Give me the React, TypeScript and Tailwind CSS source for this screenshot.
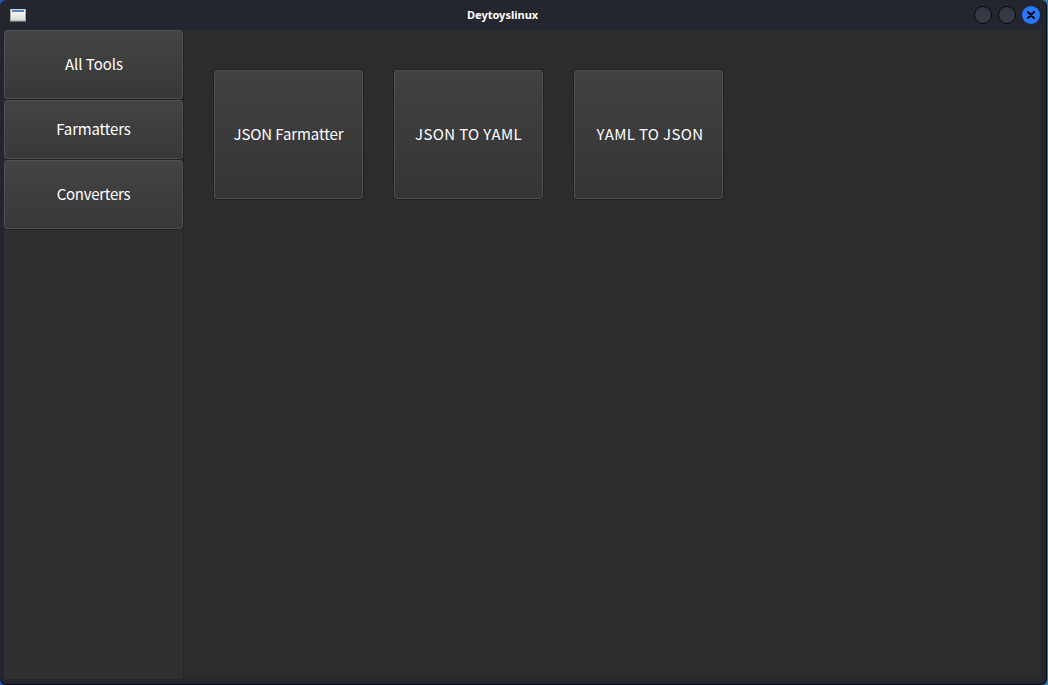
const categories = [
  { label: 'All Tools', style: 'h-[69px] pl-[1px] tracking-[-0.05px]' },
  { label: 'Farmatters', style: 'h-[59px] tracking-[-0.15px]' },
  { label: 'Converters', style: 'h-[69px] tracking-[-0.25px]' },
];

const tools = [
  { label: 'JSON Farmatter', style: 'tracking-[-0.1px]' },
  { label: 'JSON TO YAML', style: 'tracking-[0.36px]' },
  { label: 'YAML TO JSON', style: 'pl-[3px] tracking-[0.36px]' },
];

const buttonStyle =
  "flex shrink-0 items-center justify-center rounded-[3px] border border-[#505050] bg-linear-to-b pb-[2px] font-['Noto_Sans_CJK_SC',sans-serif] text-[15px] leading-5 font-normal text-white shadow-[0_0_0_1px_#222222]";

function TitleBar() {
  return (
    <header className="grid h-[30px] shrink-0 grid-cols-[457px_auto_1fr] items-center pr-[6px] pl-[10px]">
      <svg width="16" height="14" viewBox="0 0 16 14" aria-hidden="true">
        <defs>
          <linearGradient id="pane" x1="0" y1="0" x2="0" y2="1">
            <stop offset="0" stopColor="#ffffff" />
            <stop offset="1" stopColor="#d6d9d0" />
          </linearGradient>
        </defs>
        <rect x="0.5" y="1.5" width="15" height="11.5" fill="url(#pane)" stroke="#a3a9a2" />
        <rect x="1" y="1" width="14" height="1" fill="#c5d4e8" />
        <rect x="2" y="2" width="12" height="2" fill="#5580bd" />
      </svg>
      <h1 className="text-[11px] leading-4 font-bold text-white">Deytoyslinux</h1>
      <div className="flex justify-end gap-[6px]">
        <button aria-label="Minimize" className="size-[18px] rounded-full border border-[#07090e] bg-linear-to-b from-[#323743] to-[#383c47]" />
        <button aria-label="Maximize" className="size-[18px] rounded-full border border-[#07090e] bg-linear-to-b from-[#323743] to-[#383c47]" />
        <button aria-label="Close" className="flex size-[18px] items-center justify-center rounded-full bg-[#2777ff]">
          <svg width="8" height="8" viewBox="0 0 8 8" aria-hidden="true">
            <path d="M1 1 7 7M7 1 1 7" stroke="#080b12" strokeWidth="2.3" strokeLinecap="round" />
          </svg>
        </button>
      </div>
    </header>
  );
}

export default function App() {
  return (
    <div className="h-[685px] w-[1048px] bg-linear-to-r from-[#2459b8] to-[#2d87a8] font-['Noto_Sans',sans-serif]">
      <div className="h-[685px] w-[1047px] overflow-hidden rounded-[6px] border-r border-b border-[#080a12] bg-[#23262f]">
        <div className="flex h-full flex-col">
          <TitleBar />
          <div className="mr-[4px] ml-[4px] flex h-[649px] overflow-hidden bg-[#2c2c2c]">
            <nav className="flex w-[180px] shrink-0 flex-col gap-px border-r border-[#242424] bg-[#303030]">
              {categories.map(({ label, style }) => (
                <button key={label} className={`${buttonStyle} ${style} from-[#444444] to-[#383838]`}>
                  {label}
                </button>
              ))}
            </nav>
            <main className="flex items-start gap-[31px] pt-10 pl-[30px]">
              {tools.map(({ label, style }) => (
                <button key={label} className={`${buttonStyle} ${style} h-[129px] w-[149px] from-[#414141] to-[#353535]`}>
                  {label}
                </button>
              ))}
            </main>
          </div>
        </div>
      </div>
    </div>
  );
}
